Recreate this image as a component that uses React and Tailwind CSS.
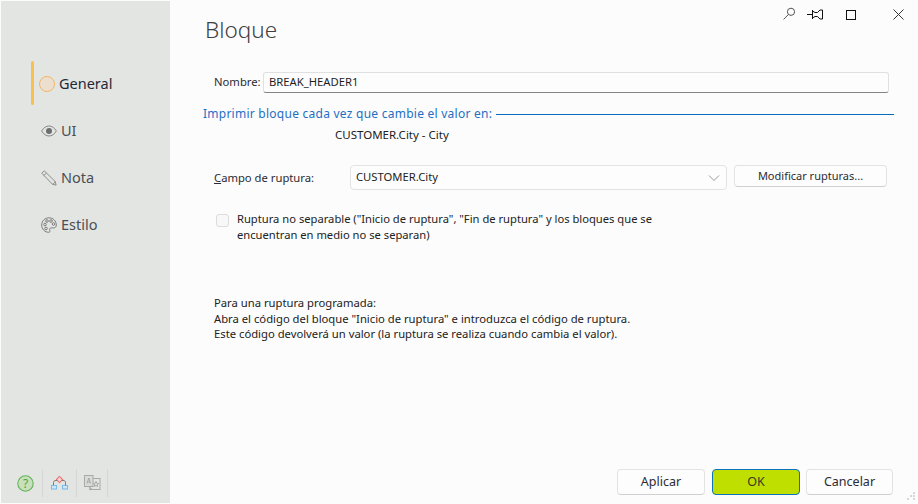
import React from "react";

const F = "font-['Noto_Sans','Open_Sans',sans-serif]";

function Nav({ icon, label, active }) {
  return (
    <div className="relative h-[47px] flex items-center pl-[40px]">
      {active && <div className="absolute left-[30px] top-[1px] w-[3px] h-[44px] rounded-sm bg-[#f9c04e]" />}
      <div className={`h-[16px] flex items-center justify-center ${active ? "w-[16px] -ml-[2px] mr-[4px]" : "w-[16px] mr-[4px]"}`}>{icon}</div>
      <span className={`text-[14.500px] leading-none ${active ? "text-[#1f2937]" : "text-[#4b4f55]"}`}>{label}</span>
    </div>
  );
}

const Eye = () => (
  <svg width="16" height="12" viewBox="0 0 16 12" fill="none">
    <path d="M.6 6C2.700 2.600 5.200 1 8 1s5.300 1.600 7.400 5c-2.100 3.400-4.600 5-7.400 5S2.700 9.400.6 6z" stroke="#8a8a8a" />
    <circle cx="8" cy="6" r="3" fill="#6e6e6e" />
  </svg>
);
const Pencil = () => (
  <svg width="16" height="16" viewBox="0 0 16 16" fill="none" stroke="#8d8d8d">
    <path d="M.8 3.200 3.200.8l11 10.700.9 3.600-3.700-.9z" />
    <path d="M2.600 5.700 5.400 3M11.700 14.400l2.800-2.800" />
  </svg>
);
const Palette = () => (
  <svg width="16" height="16" viewBox="0 0 16 16" fill="none" stroke="#7d7d7d">
    <path d="M8 .8C3.900.8.700 3.900.7 8S3.900 15.300 7.500 15.300c1.500 0 1.800-1 1.300-2-.6-1.200 0-2.400 1.400-2.400h2.500c1.600 0 2.600-1.100 2.600-2.900C15.300 3.900 12.100.8 8 .8z" />
    <circle cx="4" cy="7.500" r="1.300" />
    <circle cx="6" cy="4" r="1.300" />
    <circle cx="10" cy="4" r="1.300" />
    <circle cx="12.500" cy="7" r="1.300" />
    <circle cx="5" cy="11.500" r="1.300" />
  </svg>
);
const Sep = () => <div className="w-px h-[28px] bg-[#d5d7d4]" />;

function Btn({ children, className = "" }) {
  return (
    <button className={`rounded-[4px] border border-[#e3e3e3] border-b-[#d0d0d0] bg-[#fdfdfd] text-[#2b2b33] ${className}`}>
      {children}
    </button>
  );
}

export default function App() {
  return (
    <div className={`${F} w-[918px] h-[504px] bg-[#fcfcfc] flex overflow-hidden relative text-[11.250px] text-[#222]`}>
      <aside className="ml-px mt-px mb-px w-[169px] bg-[#e3e5e2] flex flex-col">
        <div className="pt-[59px]">
          <Nav active label="General" icon={
            <div className="w-[16px] h-[16px] shrink-0 rounded-full border border-[#f6b765] bg-[#ecdfd0]" />
          } />
          <Nav label="UI" icon={<Eye />} />
          <Nav label="Nota" icon={<Pencil />} />
          <Nav label="Estilo" icon={<Palette />} />
        </div>
        <div className="mt-auto h-[28px] mb-[6px] flex items-center">
          <div className="w-[41px] flex justify-end">
            <svg width="17" height="17" viewBox="0 0 17 17" fill="none" className="mr-[8px]">
              <circle cx="8.500" cy="8.500" r="7.700" fill="#c9e0bd" stroke="#62b35a" strokeWidth="1.100" />
              <text x="8.500" y="12.800" textAnchor="middle" fontSize="12" fill="#4da544">?</text>
            </svg>
          </div>
          <Sep />
          <div className="w-[33px] flex justify-center">
            <svg width="17" height="14" viewBox="0 0 17 14" fill="none">
              <path d="M2.500 9V6.500C2.500 5 3.500 4.500 5 4.500h7c1.500 0 2.500.5 2.500 2V9" stroke="#777" />
              <rect x="6.300" y="1.300" width="4.400" height="4.400" transform="rotate(45 8.500 3.500)" fill="#f8d4d4" stroke="#e86a6a" />
              <rect x="0.500" y="9.500" width="5" height="3.500" fill="#cfe6f8" stroke="#7ab8ea" />
              <rect x="11.500" y="9.500" width="5" height="3.500" fill="#cfe6f8" stroke="#7ab8ea" />
            </svg>
          </div>
          <Sep />
          <div className="w-[30px] flex justify-center">
            <svg width="17" height="17" viewBox="0 0 17 17" fill="none" stroke="#a8a8a8">
              <rect x="6" y="3.500" width="10" height="11" fill="#e3e5e2" />
              <rect x="0.500" y="0.500" width="8.500" height="11" fill="#d9dbd8" />
              <path d="M3 8.500 4.800 3 6.500 8.500M3.500 7h2.500" />
              <path d="m12 6.500.8 1.800 1.800.2-1.400 1.200.4 1.800-1.600-1-1.600 1 .4-1.800-1.400-1.200 1.800-.2z" />
              <path d="M6 11.500V15l2-1.500" />
            </svg>
          </div>
          <Sep />
        </div>
      </aside>

      <main className="flex-1 flex flex-col min-w-0">
        <header className="h-[62px] flex items-start justify-between">
          <h1 className="ml-[35px] mt-[14px] text-[22.500px] leading-[32px] font-light text-[#3c4043]">Bloque</h1>
          <div className="flex items-center mt-[9px]">
            <svg width="13" height="13" viewBox="0 0 13 13" fill="none" stroke="#555" className="mr-[11px] -mt-[3px]">
              <circle cx="8" cy="4.800" r="3.600" />
              <path d="M5.400 7.500.6 12.400" />
            </svg>
            <svg width="16" height="11" viewBox="0 0 16 11" fill="none" stroke="#111" className="mr-[23px]">
              <path d="M0 5.500h5M5.500 1v9M5.500 2l2.500 1.500h2.500L13 1h2.500v9H13l-2.500-2.500H8L5.500 9" />
            </svg>
            <div className="w-[10px] h-[10px] border border-[#111] mr-[37px]" />
            <svg width="11" height="11" viewBox="0 0 11 11" fill="none" stroke="#333" className="mr-[14px]">
              <path d="M.5.500l10 10M10.500.500l-10 10" />
            </svg>
          </div>
        </header>

        <div className="pl-[44px] h-[21px] mt-[10px] flex items-center">
          <span className="text-[#2b2b33] w-[49px]">Nombre:</span>
          <div className="w-[626px] h-[21px] rounded-[3px] border border-[#e0e0e0] border-b-[#858585] bg-[#fdfdfd] pl-[5px] flex items-center text-[#1f1f1f]">
            BREAK_HEADER1
          </div>
        </div>

        <div className="pl-[33px] pr-[24px] mt-[10px] flex items-center h-[22px]">
          <span className="text-[#1f6fc4] text-[12px] tracking-[0.25px] whitespace-nowrap">Imprimir bloque cada vez que cambie el valor en:</span>
          <div className="flex-1 h-px bg-[#0a6cc0] ml-[4px]" />
        </div>
        <div className="pl-[165px] h-[20px] flex items-center text-[#222] text-[11.500px]">CUSTOMER.City - City</div>

        <div className="pl-[44px] mt-[20px] flex items-start h-[25px]">
          <span className="w-[136px] leading-[25px] text-[#2b2b33]"><span className="underline">C</span>ampo de ruptura:</span>
          <div className="w-[377px] h-[25px] rounded-[4px] border border-[#e3e3e3] bg-[#fdfdfd] pl-[5px] pr-[6px] flex items-center justify-between">
            <span>CUSTOMER.City</span>
            <svg width="12" height="8" viewBox="0 0 12 8" fill="none" stroke="#9a9a9a"><path d="M1 1.500 6 6.500l5-5" /></svg>
          </div>
          <Btn className="ml-[7px] w-[153px] h-[22px] text-[11px]">Modificar rupturas...</Btn>
        </div>

        <div className="pl-[46px] mt-[21px] flex items-start">
          <div className="w-[13px] h-[13px] mt-[3px] rounded-[3px] border border-[#dcdcdc] bg-[#f8f8f8] shrink-0" />
          <p className="ml-[8px] w-[425px] leading-[16px] text-[11.200px]">Ruptura no separable ("Inicio de ruptura", "Fin de ruptura" y los bloques que se encuentran en medio no se separan)</p>
        </div>

        <div className="pl-[44px] mt-[52px] leading-[15.500px] whitespace-nowrap">
          <p>Para una ruptura programada:</p>
          <p>Abra el código del bloque "Inicio de ruptura" e introduzca el código de ruptura.</p>
          <p>Este código devolverá un valor (la ruptura se realiza cuando cambia el valor).</p>
        </div>

        <footer className="mt-auto mb-[9px] pr-[25px] flex justify-end gap-[6px]">
          <Btn className="w-[88px] h-[26px] text-[12.500px]">Aplicar</Btn>
          <button className="w-[88px] h-[26px] ml-px rounded-[4px] border border-[#0d72b8] bg-[#bfdf00] text-[#3a3a20] text-[12.500px]">OK</button>
          <Btn className="w-[87px] h-[26px] text-[12.500px]">Cancelar</Btn>
        </footer>
      </main>

      <svg width="8" height="8" viewBox="0 0 8 8" className="absolute right-[3px] bottom-[4px]" fill="#d8d8d8">
        <rect x="6" y="0" width="2" height="2" />
        <rect x="3" y="3" width="2" height="2" />
        <rect x="6" y="3" width="2" height="2" />
        <rect x="0" y="6" width="2" height="2" />
        <rect x="6" y="6" width="2" height="2" />
      </svg>
    </div>
  );
}
